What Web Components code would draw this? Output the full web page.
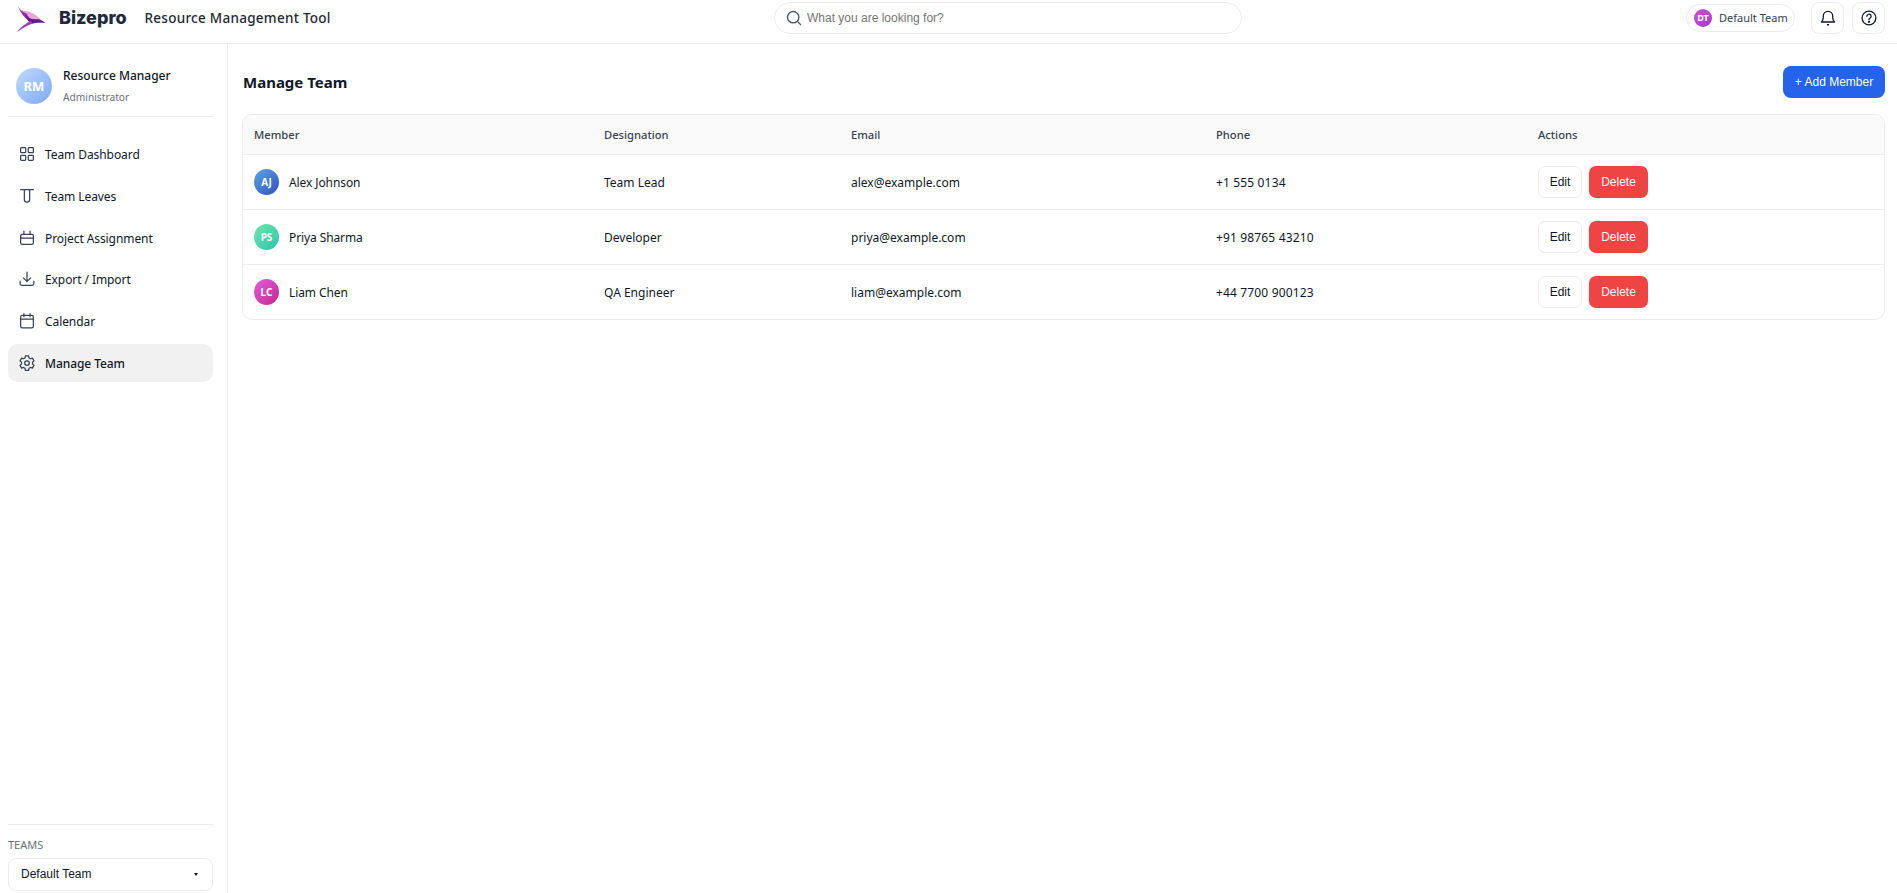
<!DOCTYPE html>
<html lang="en"><head><meta charset="utf-8"><title>Bizepro</title>
<style>
html,body{margin:0;height:100%;background:#fff;font-family:"Noto Sans","Liberation Sans",sans-serif;color:#0f172a}
</style></head><body>
<app-shell>
  <top-bar slot="top"></top-bar>
  <side-bar slot="side">
    <nav-item label="Team Dashboard" icon="grid"></nav-item>
    <nav-item label="Team Leaves" icon="leave"></nav-item>
    <nav-item label="Project Assignment" icon="project"></nav-item>
    <nav-item label="Export / Import" icon="download"></nav-item>
    <nav-item label="Calendar" icon="calendar"></nav-item>
    <nav-item label="Manage Team" icon="gear" active></nav-item>
  </side-bar>
  <team-page slot="main">
    <team-row head member="Member" role="Designation" email="Email" phone="Phone" actions="Actions"></team-row>
    <team-row member="Alex Johnson" initials="AJ" c1="#60a5e0" c2="#2f4fc4" role="Team Lead" email="alex@example.com" phone="+1 555 0134"></team-row>
    <team-row member="Priya Sharma" initials="PS" c1="#6ee7a7" c2="#2cc4b0" role="Developer" email="priya@example.com" phone="+91 98765 43210"></team-row>
    <team-row last member="Liam Chen" initials="LC" c1="#e55cd8" c2="#c02a90" role="QA Engineer" email="liam@example.com" phone="+44 7700 900123"></team-row>
  </team-page>
</app-shell>
<script>
const ICONS={
 grid:'<rect x="2.500" y="2.500" width="4.800" height="4.800" rx=".8"/><rect x="9.700" y="2.500" width="4.800" height="4.800" rx=".8"/><rect x="2.500" y="9.700" width="4.800" height="4.800" rx=".8"/><rect x="9.700" y="9.700" width="4.800" height="4.800" rx=".8"/>',
 leave:'<path d="M2.500 2.500h12M6 2.500v9.200a2.500 2.500 0 0 0 5 0V2.500"/>',
 project:'<rect x="2.500" y="5" width="12" height="9.500" rx="1.600"/><path d="M2.500 8.600h12M5.600 2v3M11.400 2v3"/>',
 download:'<path d="M8.500 2v8.600M5 7.400l3.500 3.400L12 7.400M2 10.600v2.200a1.700 1.700 0 0 0 1.700 1.700h9.600a1.700 1.700 0 0 0 1.700-1.700v-2.200"/>',
 calendar:'<rect x="2.500" y="3.200" width="12" height="11.800" rx="1.600"/><path d="M2.500 6.800h12M5.600 1.500v3M11.400 1.500v3"/>',
 gear:'<path d="M7 1.800h3l.4 1.900 1.400.8 1.800-.6 1.500 2.600-1.400 1.300v1.600l1.400 1.300-1.500 2.600-1.800-.6-1.400.8-.4 1.900H7l-.4-1.900-1.400-.8-1.800.6-1.500-2.600 1.400-1.300V7.800L1.900 6.500l1.500-2.600 1.800.6 1.400-.8z" stroke-linejoin="round"/><circle cx="8.500" cy="8.600" r="2.200"/>'
};
function def(name,html){
  customElements.define(name,class extends HTMLElement{
    connectedCallback(){
      if(this.shadowRoot)return;
      const r=this.attachShadow({mode:'open'});
      r.innerHTML=typeof html==='function'?html(this):html;
    }
  });
}
const UI='"Noto Sans","Liberation Sans",sans-serif';
def('app-shell',`<style>
:host{display:grid;grid-template-columns:228px 1fr;grid-template-rows:44px 1fr;height:893px;overflow:hidden}
.t{grid-column:1/3}
</style><div class="t"><slot name="top"></slot></div><slot name="side"></slot><slot name="main"></slot>`);
def('top-bar',`<style>
:host{display:grid;grid-template-columns:757px 468px 1fr;align-items:center;height:44px;box-sizing:border-box;border-bottom:1px solid #ededed;background:#fff;padding:0 12px 8px 17px}
.l,.r{display:flex;align-items:center}
svg{display:block}
.logo{margin-top:4px}
.brand{font:800 18px/20px Inter,sans-serif;color:#1e293b;margin-left:13px;width:85.500px;white-space:nowrap}
.app{font:500 13.500px/20px ${UI};color:#1f2937;white-space:nowrap;letter-spacing:.27px}
.search{height:32px;box-sizing:border-box;border:1px solid #ececec;border-radius:16px;display:flex;align-items:center;padding:0 11px;gap:5px;font:12px "Liberation Sans",sans-serif;color:#757575}
.r{justify-content:flex-end}
.pill{height:28px;box-sizing:border-box;border:1px solid #ececec;border-radius:14px;display:flex;align-items:center;padding:0 7px;gap:7px;font:400 11px ${UI};color:#374151;margin-right:16px;width:109px;white-space:nowrap}
.dot{width:18px;height:18px;border-radius:50%;background:linear-gradient(135deg,#d24fd0,#a03cc8);color:#fff;font:700 9px/18px ${UI};text-align:center;flex:none}
.ib{width:33px;height:32px;box-sizing:border-box;border:1px solid #ececec;border-radius:8px;display:flex;align-items:center;justify-content:center}
.ib+.ib{margin-left:8px}
</style>
<div class="l">
<svg class="logo" width="29" height="27" viewBox="0 0 29 27">
<path d="M4.500 4C11 5 18 7 24 14L12 14C9 11 6 8 4.500 4Z" fill="#eba3dd"/>
<path d="M1 0C3 4 6 6.500 9.500 7.500C11 10 12.500 12 14 14L12 15C7.500 12 3 6 1 0Z" fill="#8a2ea6"/>
<path d="M9 10C12.500 13 17 13.500 22 13.300C24.500 14 26.500 15.300 28 17C23 16.500 18 16.800 14 18C11 15.500 10 13 9 10Z" fill="#5f1f86"/>
<path d="M13 15C15 16 16 17 14.500 18C9 20 4 23 0 26.500C2.500 22 7 18.500 13 15Z" fill="#9a45bd"/>
</svg>
<div class="brand">Bizepro</div><div class="app">Resource Management Tool</div></div>
<div class="search"><svg width="16" height="16" viewBox="0 0 16 16" fill="none" stroke="#475569" stroke-width="1.300"><circle cx="7.200" cy="7.200" r="5.700"/><path d="M11.500 11.500L15 15"/></svg><span>What you are looking for?</span></div>
<div class="r"><div class="pill"><span class="dot">DT</span><span>Default Team</span></div>
<div class="ib"><svg width="16" height="18" viewBox="0 0 16 18" fill="none" stroke="#111827" stroke-width="1.300"><path d="M1.500 13h13c-1.300-1.200-1.800-2.500-1.800-4.500V7a4.700 4.700 0 0 0-9.400 0v1.500c0 2-.5 3.300-1.800 4.500Z" stroke-linejoin="round"/><path d="M7 15.800h2" stroke-width="1.500"/></svg></div>
<div class="ib"><svg width="16" height="16" viewBox="0 0 16 16" fill="none" stroke="#111827" stroke-width="1.300"><circle cx="8" cy="8" r="6.900"/><path d="M5.900 6.200a2.100 2.100 0 1 1 3.300 1.800c-.8.500-1.200.9-1.200 1.800" stroke-linecap="round"/><circle cx="8" cy="11.800" r=".5" fill="#111827"/></svg></div></div>`);
def('side-bar',`<style>
:host{display:flex;flex-direction:column;box-sizing:border-box;height:849px;border-right:1px solid #ededed;padding:0 14px 2px 8px;background:#fff}
.prof{display:flex;align-items:center;height:73px;box-sizing:border-box;border-bottom:1px solid #ededed;padding:12px 8px 0;gap:11px;margin-bottom:18px}
.av{width:36px;height:36px;border-radius:50%;background:linear-gradient(135deg,#bfdbfe,#7fa8f8);color:#fff;font:700 13px/36px ${UI};text-align:center;flex:none}
.n{font:500 12px/15px ${UI};color:#0f172a}
.a{font:400 10.200px/14px ${UI};color:#6b7280;margin-top:7px}
nav{display:flex;flex-direction:column;gap:3.800px}
.b{margin-top:auto;border-top:1px solid #ededed;padding-top:13px}
.lb{font:400 11px/13px ${UI};color:#6b7280;margin-bottom:7px}
.sel{height:33px;box-sizing:border-box;border:1px solid #ececec;border-radius:8px;display:flex;align-items:center;justify-content:space-between;padding:0 14px 1px 12px;font:12px "Liberation Sans",sans-serif;color:#111827}
.car{width:0;height:0;border:2px solid transparent;border-top:3px solid #111;border-bottom:0}
</style>
<div class="prof"><div class="av">RM</div><div><div class="n">Resource Manager</div><div class="a">Administrator</div></div></div>
<nav><slot></slot></nav>
<div class="b"><div class="lb">TEAMS</div><div class="sel"><span>Default Team</span><span class="car"></span></div></div>`);
def('nav-item',el=>`<style>
:host{display:flex;align-items:center;height:38px;padding:0 10px;gap:9px;border-radius:10px;font:${el.hasAttribute('active')?500:400} 12px ${UI};letter-spacing:-.08px;color:#0f172a;${el.hasAttribute('active')?'background:#f1f1f1':''}}
svg{flex:none;display:block}
span{position:relative;top:.5px}
</style><svg width="18" height="18" viewBox="0 0 17 17" fill="none" stroke="#374151" stroke-width="1.150" stroke-linecap="round">${ICONS[el.getAttribute('icon')]}</svg><span>${el.getAttribute('label')}</span>`);
def('team-page',`<style>
:host{display:block;padding:22px 12px 0 14px}
.h{display:flex;align-items:center;justify-content:space-between;height:32px;margin-bottom:16px}
h1{margin:0 0 0 1px;font:700 15px ${UI};color:#0f172a}
.add{height:32px;width:102px;box-sizing:border-box;border:0;border-radius:8px;background:#2563eb;color:#fff;font:12px "Liberation Sans",sans-serif;padding:0}
.t{border:1px solid #ececec;border-radius:10px;overflow:hidden}
</style><div class="h"><h1>Manage Team</h1><button class="add">+ Add Member</button></div><div class="t"><slot></slot></div>`);
def('team-row',el=>{
 const a=n=>el.getAttribute(n)||'';const head=el.hasAttribute('head');const last=el.hasAttribute('last');
 const mem=head?a('member'):`<div class="m"><span class="av" style="background:linear-gradient(135deg,${a('c1')},${a('c2')})">${a('initials')}</span><span>${a('member')}</span></div>`;
 const act=head?a('actions'):`<div class="act"><button class="e">Edit</button><button class="d">Delete</button></div>`;
 return `<style>
:host{display:grid;grid-template-columns:350px 247px 365px 322px 1fr;align-items:center;box-sizing:border-box;height:${head?40:last?54:55}px;padding-left:11px;${last?'':'border-bottom:1px solid #ececec;'}font:${head?500:400} ${head?11.200:12}px ${UI};color:${head?'#374151':'#0f172a'};${head?'background:#fafafa;':''}}
.m{display:flex;align-items:center;gap:10px}
.av{width:25px;height:26px;border-radius:50%;color:#fff;font:700 10px/26px ${UI};text-align:center}
.m span:last-child{letter-spacing:-.1px}
.ph{letter-spacing:${head?0:.15}px}
.act{display:flex;gap:7px;margin-top:-1px}
button{height:32px;box-sizing:border-box;border-radius:7px;font:12px "Liberation Sans",sans-serif;padding:0}
.e{width:44px;background:#fff;border:1px solid #ececec;color:#0f172a}
.d{width:59px;background:#ef4444;border:0;color:#fff}
</style><div>${mem}</div><div>${a('role')}</div><div>${a('email')}</div><div class="ph">${a('phone')}</div><div>${act}</div>`});
</script>
</body></html>
